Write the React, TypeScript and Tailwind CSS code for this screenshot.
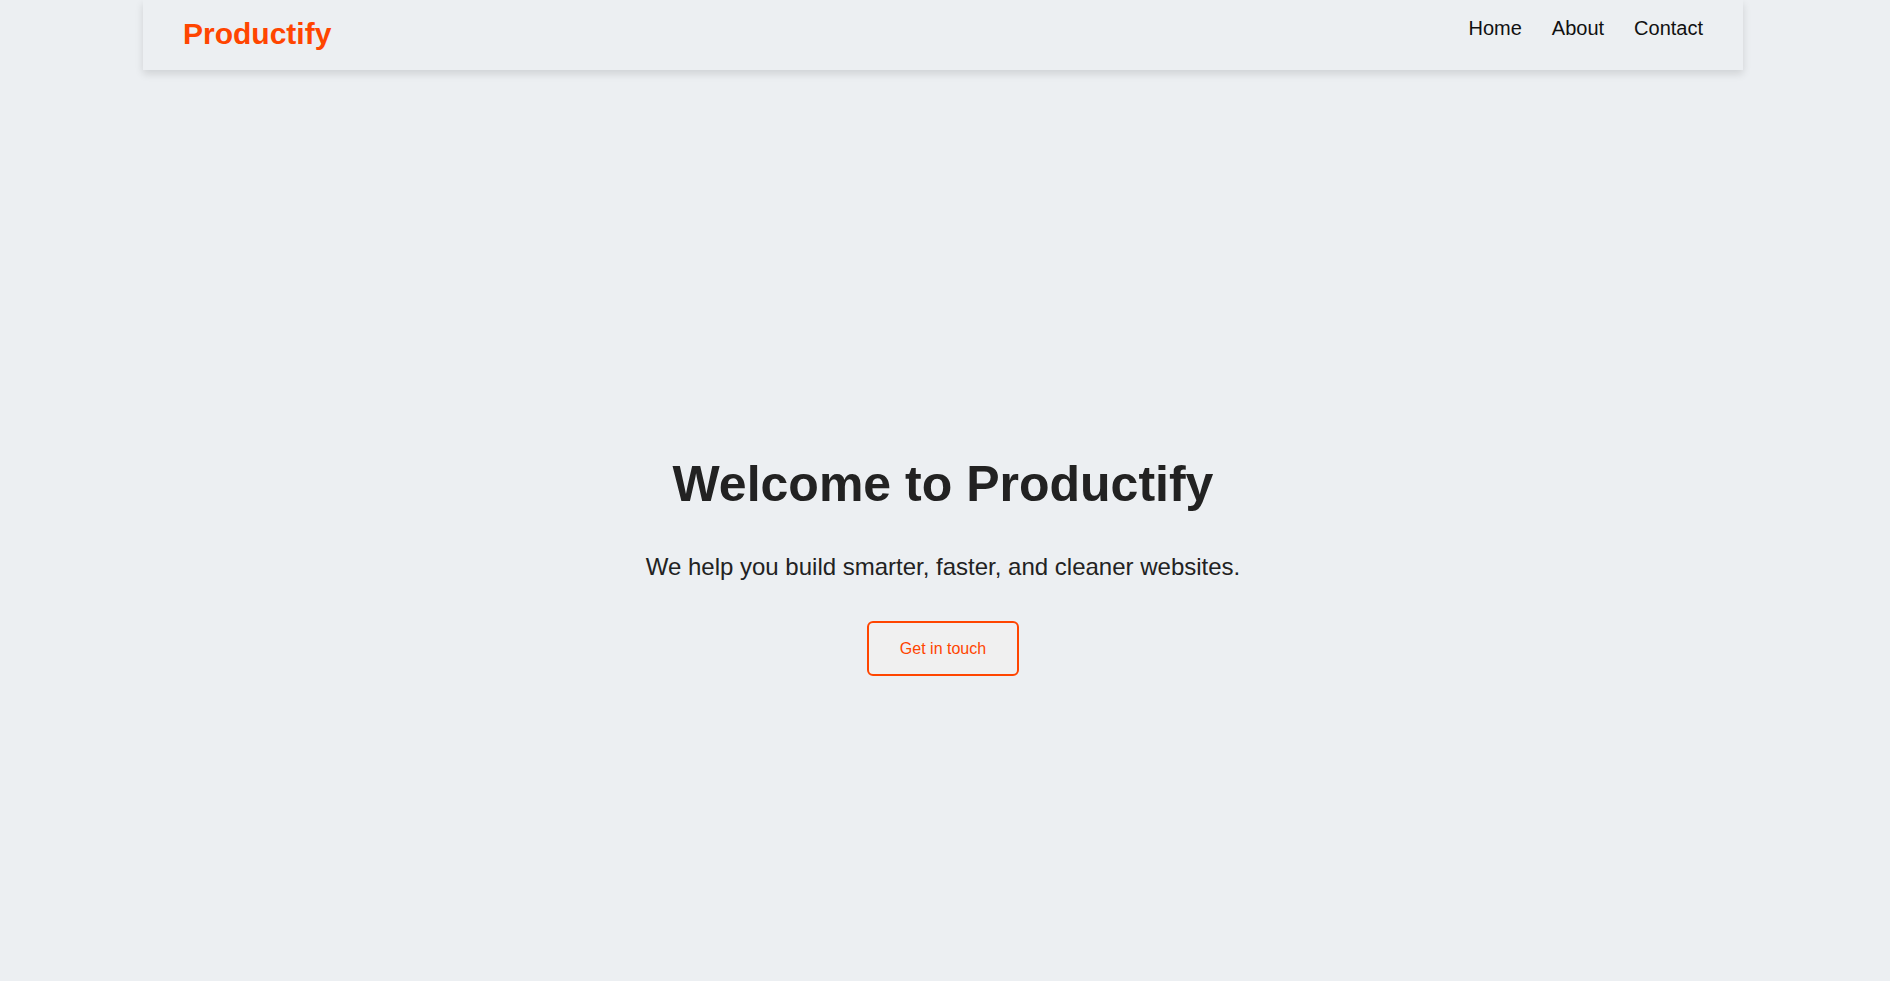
const navLinks = ["Home", "About", "Contact"];

const App = () => {
	return (
		<div className="min-h-screen bg-[#eceff2] pr-1 font-['Liberation_Sans',Arial,sans-serif]">
			<header className="mx-auto flex h-[70px] w-[1600px] items-start justify-between bg-[#eceff2] px-10 pt-[17px] shadow-[0_4px_8px_rgba(0,0,0,0.12)]">
				<div className="text-[30px] font-bold leading-[1.15] text-[#ff4500]">
					Productify
				</div>
				<nav className="flex gap-[30px] text-[20px] leading-[1.15] text-[#111]">
					{navLinks.map((link) => (
						<a key={link} href="#">
							{link}
						</a>
					))}
				</nav>
			</header>

			<main className="flex flex-col items-center pt-[386px] text-center">
				<h1 className="text-[50px] font-bold leading-[1.15] text-[#222]">
					Welcome to Productify
				</h1>
				<p className="mt-[39px] text-[24px] leading-[1.15] text-[#222]">
					We help you build smarter, faster, and cleaner websites.
				</p>
				<button className="mt-[41px] rounded-md border-2 border-[#ff4500] bg-[#f0f0f0] px-[31px] py-4 text-[16px] leading-[19px] text-[#ff4500]">
					Get in touch
				</button>
			</main>
		</div>
	);
};

export default App;
